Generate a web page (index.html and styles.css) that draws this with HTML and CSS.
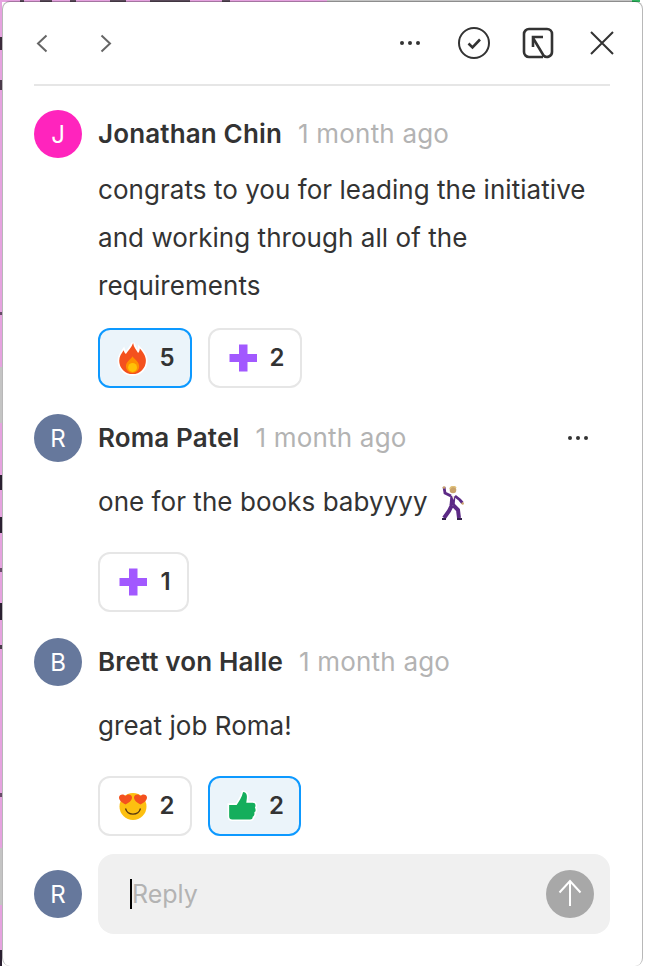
FILE: index.html
```html
<!DOCTYPE html>
<html lang="en">
<head>
<meta charset="utf-8">
<title>Comment thread</title>
<link rel="stylesheet" href="styles.css">
</head>
<body>
<main class="panel">
  <header class="toolbar">
    <div class="nav">
      <svg class="icon" viewBox="0 0 24 24"><path d="M12.500 4.500l-8.500 8 8.500 8" class="ln"/></svg>
      <svg class="icon" viewBox="0 0 24 24"><path d="M3.500 4.500l8.500 8-8.500 8" class="ln"/></svg>
    </div>
    <div class="actions">
      <svg class="icon dots" viewBox="0 0 24 24"><circle cx="4" cy="12" r="2" class="fill"/><circle cx="12" cy="12" r="2" class="fill"/><circle cx="20" cy="12" r="2" class="fill"/></svg>
      <svg class="icon-lg" viewBox="0 0 32 32"><circle cx="16" cy="16" r="15" class="ln-d"/><path d="M10.500 16.500l4 4 7.500-8" class="ln-b"/></svg>
      <svg class="icon-lg" viewBox="0 0 32 32"><path d="M21 30H7a5 5 0 0 1-5-5V7a5 5 0 0 1 5-5h18a5 5 0 0 1 5 5v18a5 5 0 0 1-8.500 3.500L11 11" class="ln-b"/><path d="M11 20V10h10" class="ln-b"/></svg>
      <svg class="icon-lg close" viewBox="0 0 32 32"><path d="M5 5l22 22M27 5L5 27" class="ln-d"/></svg>
    </div>
  </header>

  <article class="comment comment-lead">
    <div class="head">
      <span class="avatar avatar-pink">J</span>
      <strong class="name">Jonathan Chin</strong>
      <span class="time">1 month ago</span>
    </div>
    <p class="body">congrats to you for leading the initiative<br>and working through all of the<br>requirements</p>
    <div class="reactions">
      <button class="chip chip-on">
        <svg class="emoji" viewBox="1 2 27 27"><path d="M15.500 2c.5 4 3 6 4.500 9 1-1 1.500-2.500 1.500-4 3 3 5.500 7 5.500 11a12 12 0 0 1-24 0c0-4 2-6.500 4-9.500.5 1.500 1 2.500 2 3.500C11 9 14 6 15.500 2z" fill="#f4511e" stroke="#fff" stroke-width="3" paint-order="stroke"/><path d="M15 14c1 2 6 5 6 9a6 6 0 0 1-12 0c0-4 5-7 6-9z" fill="#ff8f00"/><circle cx="15" cy="24" r="4" fill="#ffc107"/></svg>
        <span>5</span>
      </button>
      <button class="chip">
        <svg class="emoji" viewBox="0 0 30 30"><path d="M11 1.500h8.500V11h9.500v8h-9.500v9.500H11V19H1.500v-8H11z" fill="#a259ff"/></svg>
        <span>2</span>
      </button>
    </div>
  </article>

  <article class="comment">
    <div class="head">
      <span class="avatar">R</span>
      <strong class="name">Roma Patel</strong>
      <span class="time">1 month ago</span>
      <svg class="icon more" viewBox="0 0 24 24"><circle cx="4" cy="12" r="2" class="fill"/><circle cx="12" cy="12" r="2" class="fill"/><circle cx="20" cy="12" r="2" class="fill"/></svg>
    </div>
    <p class="body">one for the books babyyyy <svg class="dancer" viewBox="0 0 22 34"><path d="M2 1L3 7l6 3M13 10l5 4 2.500 3" class="suit-thin"/><path d="M11 10l-1 9M10 19l-3 6-5 7M11 19l5 5 1 8" class="suit"/><path d="M8.500 10h5l-1 9h-5z" fill="#5c2a86"/><circle cx="11" cy="4" r="3.300" fill="#c9a26a"/><path d="M8 3a3.300 3.300 0 0 1 6-1" class="hair"/><path d="M10 10l1.500 4 1-4z" fill="#efe6d8"/><circle cx="2" cy="1.500" r="1.300" fill="#c9a26a"/><circle cx="20.700" cy="17.500" r="1.200" fill="#c9a26a"/><path d="M0 32h4v2H0zM15 32h5v2h-5z" fill="#33214a"/></svg></p>
    <div class="reactions">
      <button class="chip chip-narrow">
        <svg class="emoji" viewBox="0 0 30 30"><path d="M11 1.500h8.500V11h9.500v8h-9.500v9.500H11V19H1.500v-8H11z" fill="#a259ff"/></svg>
        <span>1</span>
      </button>
    </div>
  </article>

  <article class="comment">
    <div class="head">
      <span class="avatar">B</span>
      <strong class="name">Brett von Halle</strong>
      <span class="time">1 month ago</span>
    </div>
    <p class="body">great job Roma!</p>
    <div class="reactions">
      <button class="chip">
        <svg class="emoji" viewBox="0 0 30 30"><circle cx="15" cy="15.500" r="13.500" fill="#fdc010"/><path d="M7.500 17.500a7.800 7.800 0 0 0 15 0" fill="none" stroke="#5b3a10" stroke-width="1.300"/><path d="M7.500 13.500C4 11.500 1 9.500 1 6.500c0-3.500 5-4 6.500-1.500C9 2.500 14 3 14 6.500c0 3-3 5-6.500 7z" fill="#f4511e"/><path d="M22.500 13.500C19 11.500 16 9.500 16 6.500c0-3.500 5-4 6.500-1.500C24 2.500 29 3 29 6.500c0 3-3 5-6.500 7z" fill="#f4511e"/></svg>
        <span>2</span>
      </button>
      <button class="chip chip-on chip-slim">
        <svg class="emoji" viewBox="1 1 28 28"><path d="M3 14h7c2-3 5-7 6-12 3 0 4 3 3.500 6l-.5 4h6c3 0 3 3 2 4.500 1 1.500 1 3.500-.5 4.500.5 2-.5 3.500-1.500 4 0 2-1 2.500-2.500 2.500H6c-2 0-3-1-3-3z" fill="#14ae5c" stroke="#fff" stroke-width="3" paint-order="stroke"/></svg>
        <span>2</span>
      </button>
    </div>
  </article>

  <form class="composer">
    <span class="avatar">R</span>
    <div class="reply">
      <span class="caret"></span>
      <span class="placeholder">Reply</span>
      <span class="send">
        <svg viewBox="0 0 48 48" class="send-icon"><path d="M24 36V11M13.500 22.500L24 11l10.500 11.500" class="ln-w"/></svg>
      </span>
    </div>
  </form>
</main>
</body>
</html>
```
FILE: styles.css
```css
* { box-sizing: border-box; }
html, body { height: 100%; }
body {
  margin: 0;
  padding: 1px 3px 0 2px;
  font-family: Inter, "Liberation Sans", sans-serif;
  color: #333;
  overflow: hidden;
  background-color: #fff;
  background-repeat: no-repeat;
  background-size: 2px 100%, 100% 2px;
  background-position: 0 0, 0 0;
  background-image:
    linear-gradient(to bottom,
      #e5a2df 0 37px, #3a2a3a 37px 50px, #e5a2df 50px 80px, #4a3a4a 80px 90px, #e5a2df 90px 312px, #6a4a6a 312px 315px,
      #e5a2df 315px 367px, #c4c4c4 367px 423px, #e5a2df 423px 475px, #2a2030 475px 490px, #e5a2df 490px 517px,
      #2a2030 517px 533px, #e5a2df 533px 568px, #6a4a6a 568px 572px, #e5a2df 572px 603px, #2a2030 603px 620px,
      #e5a2df 620px 645px, #4a3a4a 645px 649px, #e5a2df 649px 793px, #6a4a6a 793px 797px, #e5a2df 797px 848px,
      #c4c4c4 848px 905px, #e5a2df 905px 950px, #2a2030 950px 966px),
    linear-gradient(to right,
      #e5a2df 0 20px, #5a4a5a 20px 24px, #e5a2df 24px 40px, #5a4a5a 40px 52px, #e5a2df 52px 70px, #5a4a5a 70px 76px,
      #e5a2df 76px 110px, #5a4a5a 110px 126px, #e5a2df 126px 150px, #5a4a5a 150px 190px, #e5a2df 190px 222px,
      #5a4a5a 222px 230px, #e5a2df 230px 327px, #c4c4c4 327px 632px, #2fb55f 632px 640px, #fff 640px);
}
.panel {
  height: 965px;
  background: #fff;
  background-clip: padding-box;
  border: 1px solid rgba(0, 0, 0, 0.28);
  border-bottom: 0;
  border-radius: 8px;
  padding: 0 32px 0 31px;
}
.toolbar {
  height: 84px;
  border-bottom: 2px solid #e6e6e6;
  display: flex;
  justify-content: space-between;
  align-items: center;
  margin-bottom: 24px;
}
.nav { display: flex; gap: 40px; }
.actions { display: flex; align-items: center; gap: 32px; margin-right: -8px; }
.dots { margin-right: 4px; }
.icon { width: 24px; height: 24px; display: block; flex: none; }
.icon-lg { width: 32px; height: 32px; display: block; flex: none; }
.ln { fill: none; stroke: #666; stroke-width: 2; }
.ln-d { fill: none; stroke: #333; stroke-width: 2; }
.ln-b { fill: none; stroke: #333; stroke-width: 2.600; }
.ln-w { fill: none; stroke: #fff; stroke-width: 2; }
.fill { fill: #333; }
.suit { fill: none; stroke: #5c2a86; stroke-width: 4; }
.suit-thin { fill: none; stroke: #5c2a86; stroke-width: 2.800; }
.hair { fill: none; stroke: #dfc07a; stroke-width: 1.600; }
.comment { padding-bottom: 26px; }
.comment-lead .body { margin-top: 8px; margin-bottom: 18px; }
.head { display: flex; align-items: center; height: 48px; }
.avatar {
  flex: none;
  width: 48px;
  height: 48px;
  border-radius: 50%;
  background: #66789c;
  color: #fff;
  display: flex;
  align-items: center;
  justify-content: center;
  font-size: 24px;
}
.avatar-pink { background: #ff24bd; }
.name { margin-left: 16px; padding-bottom: 2px; font-size: 26px; font-weight: 600; letter-spacing: 0.15px; }
.time { margin-left: 16px; padding-bottom: 2px; font-size: 26px; color: #b3b3b3; letter-spacing: 0.2px; }
.more { margin-left: auto; margin-right: 20px; }
.body {
  margin: 16px 0 26px 64px;
  font-size: 26px;
  line-height: 48px;
  letter-spacing: 0.05px;
  color: #333;
}
.dancer { width: 22px; height: 34px; vertical-align: -9px; margin-left: 7px; }
.reactions { display: flex; gap: 16px; padding-left: 64px; }
.chip {
  width: 94px;
  height: 60px;
  border: 2px solid #e6e6e6;
  border-radius: 12px;
  background: #fff;
  display: flex;
  align-items: center;
  justify-content: center;
  gap: 12px;
  padding: 0 0 2px 2px;
  font: 600 24px Inter, "Liberation Sans", sans-serif;
  color: #333;
}
.chip-on { background: #ebf4fa; border-color: #0d99ff; }
.chip-narrow { width: 91px; }
.chip-slim { width: 93px; }
.emoji { width: 30px; height: 30px; display: block; flex: none; overflow: visible; margin-top: 2px; }
.composer { display: flex; align-items: center; gap: 16px; margin-top: -8px; }
.reply {
  flex: 1;
  height: 80px;
  border-radius: 16px;
  background: #f0f0f0;
  display: flex;
  align-items: center;
  padding: 0 16px 0 32px;
}
.caret { width: 2px; height: 30px; background: #000; }
.placeholder { font-size: 25px; padding-bottom: 1px; color: #b3b3b3; }
.send {
  margin-left: auto;
  width: 48px;
  height: 48px;
  border-radius: 50%;
  background: #a8a8a8;
}
.send-icon { width: 48px; height: 48px; display: block; }
```
